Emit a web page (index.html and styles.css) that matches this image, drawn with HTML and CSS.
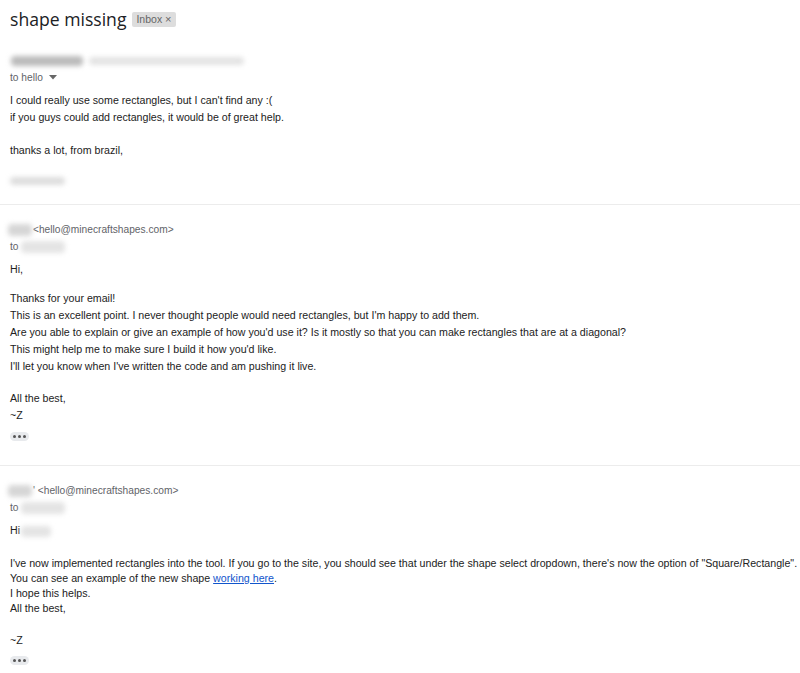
FILE: index.html
```html
<!DOCTYPE html>
<html>
<head>
<meta charset="utf-8">
<link rel="stylesheet" href="styles.css">
</head>
<body>
<div class="thread">
  <div class="subject-row">
    <h1 class="subject">shape missing</h1>
    <span class="chip">Inbox <span class="chip-x">×</span></span>
  </div>

  <div class="msg first">
    <div class="sender-row">
      <span class="blur blur-name"></span><span class="blur blur-addr"></span>
    </div>
    <div class="to-row">to hello <svg class="caret" width="8" height="5" viewBox="0 0 8 5"><path d="M0 0h8L4 4.5z" fill="#666"/></svg></div>
    <div class="body">
      <div>I could really use some rectangles, but I can't find any :(</div>
      <div>if you guys could add rectangles, it would be of great help.</div>
      <div class="blank b16"></div>
      <div>thanks a lot, from brazil,</div>
      <div class="blank b13"></div>
      <div class="sig"><span class="blur blur-sig"></span></div>
    </div>
  </div>

  <hr class="sep sep1">

  <div class="msg">
    <div class="sender-row grey"><span class="blur blur-s2"></span>&lt;hello@minecraftshapes.com&gt;</div>
    <div class="to-row">to <span class="blur blur-to"></span></div>
    <div class="body">
      <div>Hi,</div>
      <div class="blank b12"></div>
      <div>Thanks for your email!</div>
      <div>This is an excellent point. I never thought people would need rectangles, but I'm happy to add them.</div>
      <div>Are you able to explain or give an example of how you'd use it? Is it mostly so that you can make rectangles that are at a diagonal?</div>
      <div>This might help me to make sure I build it how you'd like.</div>
      <div>I'll let you know when I've written the code and am pushing it live.</div>
      <div class="blank b15"></div>
      <div>All the best,</div>
      <div>~Z</div>
    </div>
    <div class="dots"><span></span><span></span><span></span></div>
  </div>

  <hr class="sep">

  <div class="msg">
    <div class="sender-row grey"><span class="blur blur-s3"></span>' &lt;hello@minecraftshapes.com&gt;</div>
    <div class="to-row">to <span class="blur blur-to"></span></div>
    <div class="body tight">
      <div class="hi-row">Hi <span class="blur blur-hi"></span></div>
      <div class="blank b20"></div>
      <div>I've now implemented rectangles into the tool. If you go to the site, you should see that under the shape select dropdown, there's now the option of "Square/Rectangle".</div>
      <div>You can see an example of the new shape <a href="#">working here</a>.</div>
      <div>I hope this helps.</div>
      <div>All the best,</div>
      <div class="blank b19"></div>
      <div>~Z</div>
    </div>
    <div class="dots"><span></span><span></span><span></span></div>
  </div>
</div>
</body>
</html>
```

FILE: styles.css
```css
html, body {
  margin: 0;
  padding: 0;
  background: #fff;
}
body {
  font-family: "Liberation Sans", Arial, sans-serif;
  color: #222;
  overflow: hidden;
}
.thread {
  display: flex;
  flex-direction: column;
}
.subject-row {
  display: flex;
  align-items: center;
  gap: 6px;
  padding: 6px 0 0 10px;
  height: 26px;
}
.subject {
  margin: 0;
  font-family: "Open Sans", Roboto, sans-serif;
  font-weight: 400;
  font-size: 17.6px;
  color: #202124;
  line-height: 24px;
}
.chip {
  background: #ddd;
  color: #666;
  font-size: 10.5px;
  border-radius: 2px;
  padding: 1px 4px;
  line-height: 13px;
}
.chip-x {
  font-size: 11px;
}
.msg {
  padding-left: 10px;
  display: flex;
  flex-direction: column;
}
.msg.first {
  padding-top: 20px;
}
.sender-row {
  height: 17px;
  display: flex;
  align-items: center;
  font-size: 10.2px;
  line-height: 17px;
  white-space: nowrap;
}
.grey {
  color: #5f6368;
}
.to-row {
  font-size: 10.2px;
  color: #5f6368;
  line-height: 17px;
  height: 17px;
  display: flex;
  align-items: center;
}
.caret {
  margin-left: 6px;
}
.body {
  font-size: 10.65px;
  line-height: 17px;
  color: #222;
  margin-top: 6px;
  white-space: nowrap;
}
.body.tight {
  line-height: 15px;
}
.body.tight .hi-row {
  line-height: 17px;
}
.blank {
  height: 17px;
}
.blank.b12 { height: 12px; }
.blank.b13 { height: 13px; }
.blank.b15 { height: 15px; }
.blank.b16 { height: 16px; }
.blank.b19 { height: 17px; }
.blank.b20 { height: 17px; }
.body a {
  color: #15c;
}
.blur {
  display: inline-block;
  filter: blur(2.5px);
  border-radius: 4px;
}
.blur-name {
  width: 72px;
  height: 10px;
  background: #bbb;
  margin-left: 1px;
}
.blur-addr {
  width: 155px;
  height: 8px;
  background: #e3e3e3;
  margin-left: 6px;
}
.blur-sig {
  width: 55px;
  height: 8px;
  background: #ddd;
  vertical-align: middle;
}
.sig {
  height: 17px;
  display: flex;
  align-items: center;
}
.blur-s2,
.blur-s3 {
  width: 24px;
  height: 12px;
  background: #d6d6d6;
  margin-left: -2px;
  margin-right: 1px;
}
.blur-to {
  width: 44px;
  height: 12px;
  background: #e4e4e4;
  margin-left: 2px;
}
.blur-hi {
  width: 30px;
  height: 11px;
  background: #e4e4e4;
  vertical-align: middle;
  margin-left: -2px;
}
.dots {
  display: flex;
  align-items: center;
  justify-content: center;
  gap: 2px;
  width: 19px;
  height: 9px;
  background: #e8eaed;
  border-radius: 5px;
  margin-top: 8px;
}
.dots span {
  width: 3px;
  height: 3px;
  border-radius: 50%;
  background: #555;
}
.sep {
  border: 0;
  border-top: 1px solid #ececec;
  margin: 24px 0 16px;
  width: 100%;
}
.sep.sep1 {
  margin-top: 15px;
}
```
